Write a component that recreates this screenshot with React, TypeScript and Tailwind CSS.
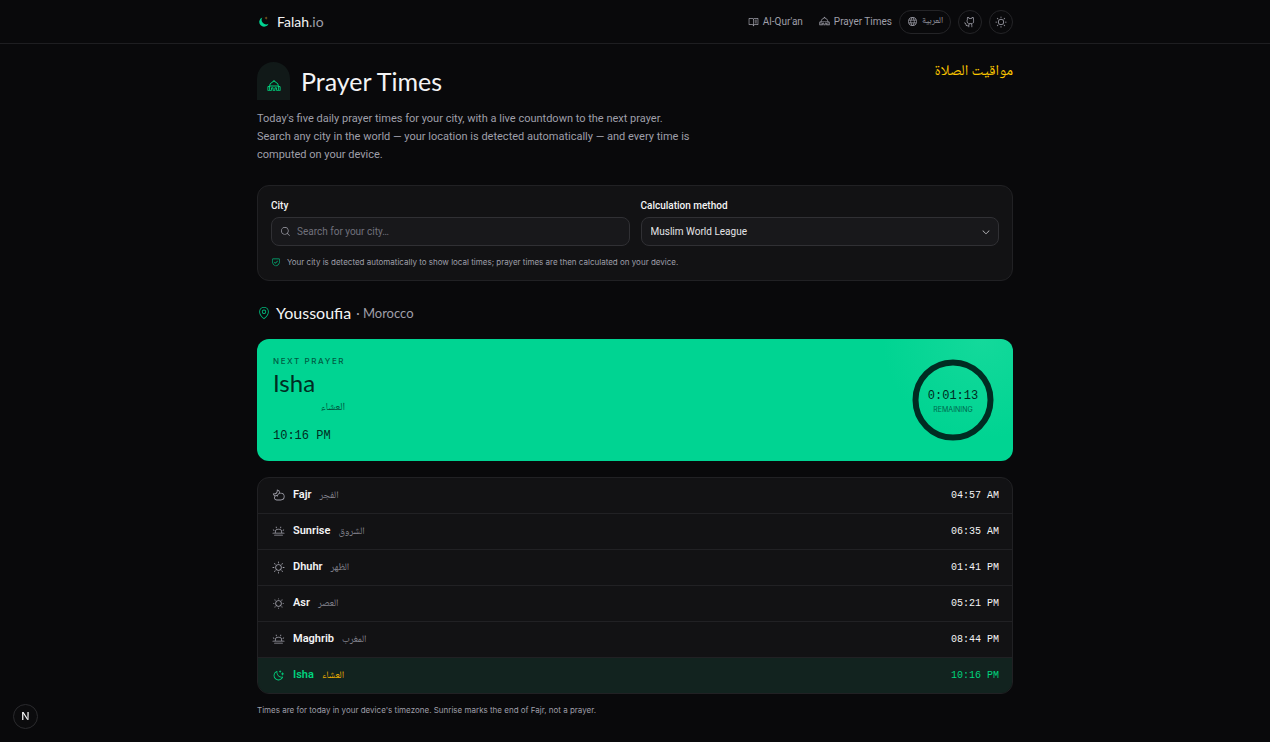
import React, { useState } from 'react';
import type { IconType } from 'react-icons';
import {
  PiBookOpenText,
  PiCaretDown,
  PiCloudMoon,
  PiGithubLogo,
  PiGlobe,
  PiMagnifyingGlass,
  PiMapPin,
  PiMoonStars,
  PiMosque,
  PiShieldCheck,
  PiSun,
  PiSunDim,
  PiSunHorizon,
} from 'react-icons/pi';

interface Prayer {
  name: string;
  arabic: string;
  time: string;
  icon: IconType;
}

const prayers: Prayer[] = [
  { name: 'Fajr', arabic: 'الفجر', time: '04:57 AM', icon: PiCloudMoon },
  { name: 'Sunrise', arabic: 'الشروق', time: '06:35 AM', icon: PiSunHorizon },
  { name: 'Dhuhr', arabic: 'الظهر', time: '01:41 PM', icon: PiSun },
  { name: 'Asr', arabic: 'العصر', time: '05:21 PM', icon: PiSunDim },
  { name: 'Maghrib', arabic: 'المغرب', time: '08:44 PM', icon: PiSunHorizon },
  { name: 'Isha', arabic: 'العشاء', time: '10:16 PM', icon: PiMoonStars },
];

const methods = ['Muslim World League', 'Egyptian General Authority', 'Umm al-Qura, Makkah', 'ISNA'];

const display = "font-['Lato',sans-serif]";
const mono = "font-['Liberation_Mono',monospace]";
const arabicFont = "font-['Noto_Naskh_Arabic','Amiri','DejaVu_Sans',serif]";

function Header() {
  return (
    <header className="border-b border-[#1e1e21]">
      <div className="mx-auto flex h-[43px] max-w-[756px] items-center justify-between">
        <a href="#" className="flex items-center gap-2">
          <svg viewBox="-3 0 25 25" className="size-3" aria-hidden="true">
            <path d="M8 3A10 10 0 1 0 21 16A9.500 9.500 0 0 1 8 3Z" fill="#00d492" />
            <path d="M16 1l1 2.300L19.300 4.300 17 5.300 16 7.600l-1-2.300L12.700 4.300 15 3.300Z" fill="#8a6420" />
          </svg>
          <span className={`text-sm text-[#f4f4f5] ${display}`}>
            Falah<span className="text-[#9f9fa9]">.io</span>
          </span>
        </a>
        <div className="flex items-center gap-[7px]">
          <nav className="flex items-center gap-4 text-[10px] text-[#9f9fa9]">
            <a href="#quran" className="flex items-center gap-1">
              <PiBookOpenText className="size-[11px]" />
              Al-Qur'an
            </a>
            <a href="#prayer-times" className="flex items-center gap-1">
              <PiMosque className="size-[11px]" />
              Prayer Times
            </a>
          </nav>
          <button className="flex h-6 w-[52px] items-center justify-center gap-1 rounded-full border border-[#242427] text-[#9f9fa9]">
            <PiGlobe className="size-[11px]" />
            <span lang="ar" className={`text-[9px] ${arabicFont}`}>العربية</span>
          </button>
          <button aria-label="GitHub" className="flex size-6 items-center justify-center rounded-full border border-[#242427] text-[#9f9fa9]">
            <PiGithubLogo className="size-3" />
          </button>
          <button aria-label="Toggle theme" className="flex size-6 items-center justify-center rounded-full border border-[#242427] text-[#9f9fa9]">
            <PiSun className="size-3" />
          </button>
        </div>
      </div>
    </header>
  );
}

function SearchPanel() {
  const [city, setCity] = useState('');
  const [method, setMethod] = useState(methods[0]);

  return (
    <section className="mt-[21px] rounded-xl border border-[#212124] bg-[#121214] px-[13px] pt-[13px] pb-[11px]">
      <div className="grid grid-cols-2 gap-[11px]">
        <div>
          <label htmlFor="city" className="block text-[10px] leading-[14px] font-medium text-[#f4f4f5]">City</label>
          <div className="mt-1 flex h-[29px] items-center gap-[6px] rounded-lg border border-[#303034] bg-[#18181b] px-2">
            <PiMagnifyingGlass className="size-[11px] text-[#9f9fa9]" />
            <input
              id="city"
              value={city}
              onChange={(e) => setCity(e.target.value)}
              placeholder="Search for your city…"
              className="min-w-0 flex-1 bg-transparent text-[10px] outline-none placeholder:text-[#71717b]"
            />
          </div>
        </div>
        <div>
          <label htmlFor="method" className="block text-[10px] leading-[14px] font-medium text-[#f4f4f5]">Calculation method</label>
          <div className="mt-1 grid items-center">
            <select
              id="method"
              value={method}
              onChange={(e) => setMethod(e.target.value)}
              className="col-start-1 row-start-1 h-[29px] w-full appearance-none rounded-lg border border-[#303034] bg-[#18181b] px-[9px] text-[10px] text-[#e4e4e7] outline-none"
            >
              {methods.map((m) => (
                <option key={m} value={m}>{m}</option>
              ))}
            </select>
            <PiCaretDown className="pointer-events-none col-start-1 row-start-1 mr-2 size-[10px] justify-self-end text-[#d4d4d8]" />
          </div>
        </div>
      </div>
      <p className="mt-[9px] flex items-center gap-[6px] font-['Inter',sans-serif] text-[8px] leading-[14px] text-[#9f9fa9]">
        <PiShieldCheck className="size-[10px] text-[#00bc7d]" />
        Your city is detected automatically to show local times; prayer times are then calculated on your device.
      </p>
    </section>
  );
}

function NextPrayer() {
  return (
    <section className="mt-[14px] flex h-[122px] items-center justify-between rounded-xl bg-[#00d492] bg-[radial-gradient(circle_at_96%_0%,#14d99b_0,#00d492_100px)] pr-[18px] pl-4 text-[#002c22]">
      <div className="w-fit">
        <p className="font-['Inter',sans-serif] text-[8px] leading-3 font-medium tracking-[1.6px] text-[#005b43]">NEXT PRAYER</p>
        <p className={`text-2xl leading-8 ${display}`}>Isha</p>
        <p lang="ar" dir="rtl" className={`text-[11px] leading-[18px] text-[#00543e] ${arabicFont}`}>العشاء</p>
        <p className={`mt-[10px] text-xs leading-[18px] ${mono}`}>10:16 PM</p>
      </div>
      <div className="grid place-items-center">
        <svg viewBox="0 0 84 84" className="col-start-1 row-start-1 size-[84px]" aria-hidden="true">
          <circle cx="42" cy="42" r="37.5" fill="none" stroke="#002c22" strokeWidth="6" />
        </svg>
        <div className="col-start-1 row-start-1 pt-[3px] text-center">
          <p className={`text-xs leading-4 ${mono}`}>0:01:13</p>
          <p className="font-['Inter',sans-serif] text-[7px] leading-3 text-[#00684d]">REMAINING</p>
        </div>
      </div>
    </section>
  );
}

function PrayerList({ next }: { next: string }) {
  return (
    <ul className="mt-4 divide-y divide-[#212124] overflow-hidden rounded-xl border border-[#212124] bg-[#121214]">
      {prayers.map((prayer) => {
        const active = prayer.name === next;
        return (
          <li
            key={prayer.name}
            className={`flex h-9 items-center px-[13px] last:h-[35px] ${active ? 'bg-[#12231f] text-[#00d47e]' : 'text-[#f4f4f5]'}`}
          >
            <prayer.icon className={`mr-2 ml-px size-[13px] ${active ? '' : 'text-[#9f9fa9]'}`} />
            <span className="text-[11px] font-semibold">{prayer.name}</span>
            <span lang="ar" className={`ml-2 text-[10px] ${arabicFont} ${active ? 'text-[#f0b100]' : 'text-[#83838d]'}`}>
              {prayer.arabic}
            </span>
            <span className={`ml-auto text-[10px] ${mono}`}>{prayer.time}</span>
          </li>
        );
      })}
    </ul>
  );
}

export default function App() {
  return (
    <div className="min-h-screen bg-[#09090b] font-['Roboto',sans-serif] text-[#f4f4f5]">
      <Header />
      <main className="mx-auto max-w-[756px] pt-[18px]">
        <div className="flex items-start justify-between">
          <div className="flex items-center gap-[11px]">
            <div className="flex h-[38px] w-[33px] items-center justify-center rounded-t-full bg-[#111918] pt-[10px]">
              <PiMosque className="size-[14px] text-[#00d47e]" />
            </div>
            <h1 className={`text-[25px] leading-8 ${display}`}>Prayer Times</h1>
          </div>
          <p lang="ar" dir="rtl" className={`text-[15px] leading-5 text-[#fcc800] ${arabicFont}`}>مواقيت الصلاة</p>
        </div>
        <p className="mt-[10px] text-[11px] leading-[18px] text-[#9f9fa9]">
          Today's five daily prayer times for your city, with a live countdown to the next prayer.
          <br />
          Search any city in the world — your location is detected automatically — and every time is
          <br />
          computed on your device.
        </p>

        <SearchPanel />

        <h2 className={`mt-5 flex items-center text-base leading-6 ${display}`}>
          <PiMapPin className="mr-[5px] size-[14px] text-[#00bc7d]" />
          Youssoufia
          <span className="ml-[5px] text-[13px] text-[#9f9fa9]">· Morocco</span>
        </h2>

        <NextPrayer />
        <PrayerList next="Isha" />

        <p className="mt-[9px] pb-6 font-['Inter',sans-serif] text-[8px] leading-[14px] text-[#9f9fa9]">
          Times are for today in your device's timezone. Sunrise marks the end of Fajr, not a prayer.
        </p>
      </main>

      <button
        aria-label="Open dev tools"
        className="fixed bottom-[13px] left-[13px] flex size-[25px] items-center justify-center rounded-full border border-[#2b2b2e] bg-[#0b0b0d] font-['Inter',sans-serif] text-[11px] font-medium text-white"
      >
        <span className="bg-linear-to-br from-white from-60% to-[#555559] bg-clip-text text-transparent">N</span>
      </button>
    </div>
  );
}
